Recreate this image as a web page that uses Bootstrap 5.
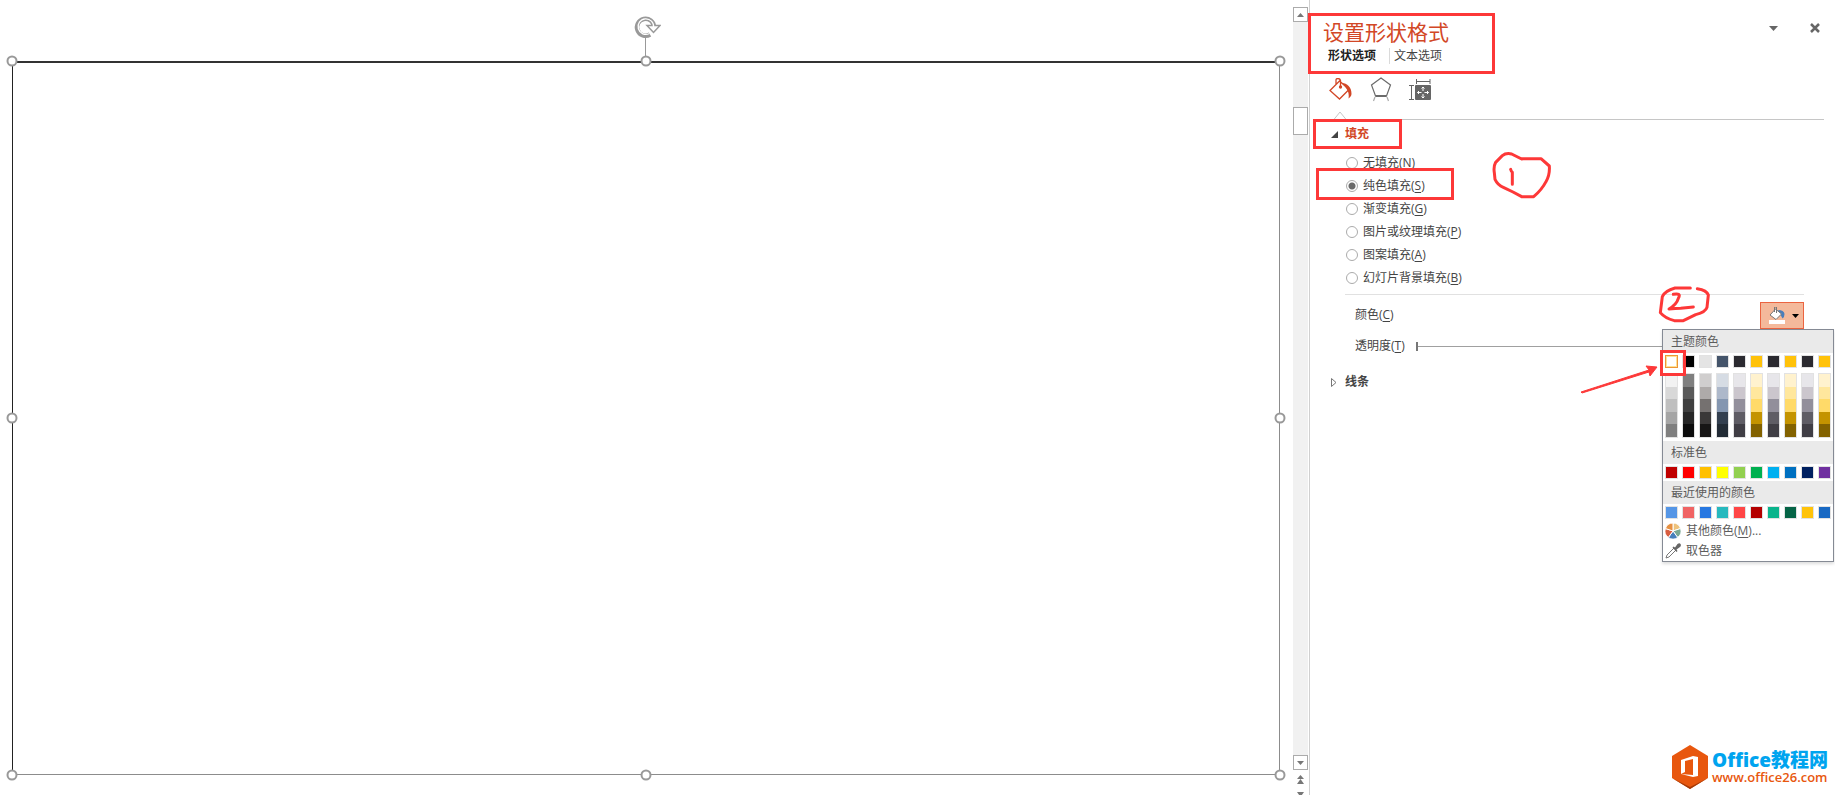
<!DOCTYPE html>
<html lang="zh-CN">
<head>
<meta charset="utf-8">
<meta name="viewport" content="width=device-width, initial-scale=1">
<title>设置形状格式</title>
<link href="https://cdn.jsdelivr.net/npm/bootstrap@5.3.0/dist/css/bootstrap.min.css" rel="stylesheet">
<style>
  body { font: 12px/16px "Open Sans", "Noto Sans CJK SC", sans-serif; color: #444; background: #fff; }
  button { font: inherit; color: inherit; background: none; border: 0; padding: 0; }
  svg { display: block; flex: none; }
  u { text-underline-offset: 2px; }

  /* slide and selected shape */
  .stage { padding: 61px 13px 20px 12px; }
  .shape::before { content: ""; position: absolute; inset: 0; border: 1px solid #8c8c8c; border-top: 2px solid #333; border-left-color: #222; }
  .grip { position: absolute; width: 11px; height: 11px; border: 2px solid #999; border-radius: 50%; background: #fff; transform: translate(-50%, -50%); }
  .rotor { position: absolute; left: 50%; bottom: 100%; transform: translateX(-50%); }

  /* slide scrollbar */
  .scroller { width: 15px; margin-right: 1px; padding-top: 7px; }
  .arrow-btn { height: 15px; border: 1px solid #ababab; background: #fff; }
  .track { background: #f1f1f1; padding-top: 85px; }
  .thumb { height: 28px; border: 1px solid #ababab; background: #fff; }
  .page-btns { height: 25px; padding-top: 5px; overflow: hidden; }

  /* format pane */
  .pane { flex: 0 0 526px; border-left: 1px solid #d0d0d0; padding: 18px 11px 0 13px; }
  .pane-title { font-size: 21px; line-height: 28px; color: #d24726; font-weight: 400; }
  .tabs { padding-left: 5px; margin-top: 2px; height: 16px; }
  .tabs .on { color: #222; font-weight: 700; }
  .tabs button + button { border-left: 1px solid #dadada; padding-left: 4px; margin-left: 13px; }
  .kinds { padding-left: 6px; margin-top: 13px; gap: 17px; }
  .rule-top { height: 9px; margin-top: 9px; padding-left: 10px; }
  .rule-top i { flex: 1; border-bottom: 1px solid #c6c6c6; }
  .section-btn { display: flex; align-items: center; gap: 7px; padding-left: 8px; font-weight: 700; height: 16px; }
  .fill-head { margin-top: 6px; color: #d24726; }
  .fills { padding: 9px 0 0 23px; }
  .fills label { display: flex; align-items: center; gap: 5px; height: 23px; }
  .fills input { appearance: none; margin: 0; width: 12px; height: 12px; border: 1px solid #ababab; border-radius: 50%; background: #fff; }
  .fills input:checked { background: radial-gradient(circle, #6a6a6a 3px, #fff 4px); }
  .props { margin: 5px 20px 0 22px; border-top: 1px solid #e1e1e1; padding: 7px 0 0 10px; }
  .color-label { padding-top: 5px; }
  .color-btn { width: 44px; height: 27px; border: 1px solid #eb6440; background: #f4b99b; padding-left: 5px; }
  .alpha { height: 34px; gap: 11px; }
  .alpha input { appearance: none; height: 9px; margin: 0 60px 0 0; background: linear-gradient(#a0a0a0, #a0a0a0) 0 4px / 100% 1px no-repeat; }
  .alpha input::-webkit-slider-thumb { appearance: none; width: 2px; height: 9px; background: #777; }
  .line-head { margin-top: 11px; gap: 8px; }

  /* colour menu */
  .palette { position: absolute; top: 27px; right: -30px; width: 172px; z-index: 2; background: #fff; border: 1px solid #858a94; box-shadow: 0 2px 3px #0002; color: #5c5c5c; }
  .palette h3 { font: inherit; line-height: 23px; height: 23px; margin: 0; padding-left: 8px; background: #eaeaea; }
  .swatches { display: grid; grid-template-columns: repeat(10, 13px); gap: 4px; padding: 2px 2px; }
  .swatches button { height: 13px; border: 1px solid #e2e2e2; }
  .swatches .picked { border: 1px solid #ee9536; box-shadow: inset 0 0 0 1px #ffe294; }
  .shades { padding: 3px 2px; }
  .shades div { border: 1px solid #e2e2e2; display: grid; grid-template-rows: repeat(5, 1fr); height: 65px; }
  .shades button { height: auto; border: 0; }
  .item { display: flex; align-items: center; gap: 5px; height: 20px; padding-left: 2px; width: 100%; }

  .notes { position: absolute; top: 0; left: 0; overflow: visible; pointer-events: none; z-index: 3; }
  .site { position: absolute; right: 7px; bottom: 6px; gap: 4px; color: #e8570e; font-weight: 600; font-size: 13px; line-height: 15px; text-decoration: none; }
  .site b { display: block; color: #00a4ef; font-size: 19px; line-height: 20px; }
</style>
</head>
<body class="d-flex vh-100 overflow-hidden">
  <main class="stage flex-grow-1 d-flex">
    <div class="shape position-relative flex-grow-1">
      <svg class="rotor" width="30" height="50" viewBox="0 0 30 50" fill="none">
        <path d="M14.500 26v24" stroke="#999"/>
        <path d="M19 23.500A8.500 8.500 0 1 1 23 16" stroke="#999" stroke-width="4.500"/>
        <path d="M16 14.500h13l-6.500 7z" fill="#fff" stroke="#999" stroke-width="1.500"/>
        <path d="M18.500 22.500A7.800 7.800 0 1 1 22.600 16.500" stroke="#fff" stroke-width="1.300"/>
      </svg>
      <span class="grip top-0 start-0"></span><span class="grip top-0 start-50"></span><span class="grip top-0 start-100"></span>
      <span class="grip top-50 start-0"></span><span class="grip top-50 start-100"></span>
      <span class="grip top-100 start-0"></span><span class="grip top-100 start-50"></span><span class="grip top-100 start-100"></span>
    </div>
  </main>

  <div class="scroller d-flex flex-column flex-shrink-0">
    <button class="arrow-btn d-flex align-items-center justify-content-center" aria-label="向上"><svg width="7" height="4"><path d="M0 4l3.500-4L7 4z" fill="#777"/></svg></button>
    <div class="track flex-grow-1"><div class="thumb"></div></div>
    <button class="arrow-btn d-flex align-items-center justify-content-center" aria-label="向下"><svg width="7" height="4"><path d="M0 0h7L3.500 4z" fill="#777"/></svg></button>
    <div class="page-btns d-flex flex-column align-items-center gap-2">
      <button aria-label="上一张"><svg width="7" height="9"><path d="M0 4l3.500-4L7 4zM0 9l3.500-5L7 9z" fill="#777"/></svg></button>
      <button aria-label="下一张"><svg width="7" height="9"><path d="M0 0h7L3.500 5zM0 5h7L3.500 9z" fill="#777"/></svg></button>
    </div>
  </div>

  <aside class="pane position-relative">
    <header class="d-flex justify-content-between">
      <h1 class="pane-title m-0">设置形状格式</h1>
      <div class="d-flex align-items-start gap-4">
        <button class="p-1" aria-label="窗格选项"><svg width="9" height="12"><path d="M0 4h9L4.500 9z" fill="#666"/></svg></button>
        <button class="p-1" aria-label="关闭"><svg width="10" height="12"><path d="M1 2l8 8M9 2l-8 8" stroke="#666" stroke-width="2.500"/></svg></button>
      </div>
    </header>
    <div class="tabs d-flex"><button class="on">形状选项</button><button>文本选项</button></div>
    <div class="kinds d-flex">
      <button aria-label="填充与线条"><svg width="24" height="23" viewBox="0 0 24 23" fill="none" stroke="#d24726" stroke-width="1.300"><path d="M10.500 3L1 12.500 10.500 21 20 11.500zM7 7V2q0-1.500 2-1.500t2.500 2V9"/><circle cx="11.500" cy="9" r="1" fill="#d24726"/><path d="M13 5c5 0 9.500 4 9.500 11 0 2-2 3.500-3 4.500 1-5-.5-9-6.500-15.500z" fill="#d24726" stroke="none"/></svg></button>
      <button aria-label="效果"><svg width="22" height="25" viewBox="0 0 22 25" fill="none" stroke="#6b6b6b" stroke-width="1.200"><path d="M11 1l9.500 7-4 11h-11l-4-11z"/><path d="M5.500 19h11" stroke-width="2"/><path d="M5 20l-1.500 4M17 20l1.500 4" stroke="#aaa"/></svg></button>
      <button aria-label="大小与属性"><svg width="22" height="23" viewBox="0 0 22 23" fill="none" stroke="#666"><path d="M7.500 1v5M21 1v5M7.500 3.500H21M0 7.500h5M0 21.500h5M2.500 7.500v14" /><rect x="6" y="7" width="16" height="15" rx="1" fill="#666" stroke="none"/><path d="M14 9v4M14 16v4M8.500 14.500h4M15.500 14.500h4M12.500 10.500L14 9l1.500 1.500M12.500 18.500L14 20l1.500-1.500M10 13l-1.500 1.500L10 16M18 13l1.500 1.500L18 16" stroke="#fff"/></svg></button>
    </div>
    <div class="rule-top d-flex"><svg width="14" height="9" fill="none" stroke="#c6c6c6"><path d="M0.500 9L7 1l6.500 8"/></svg><i></i></div>

    <button class="section-btn fill-head"><svg width="7" height="7"><path d="M7 0v7H0z" fill="#444"/></svg>填充</button>
    <div class="fills">
      <label><input type="radio" name="fill"><span>无填充(<u>N</u>)</span></label>
      <label><input type="radio" name="fill" checked><span>纯色填充(<u>S</u>)</span></label>
      <label><input type="radio" name="fill"><span>渐变填充(<u>G</u>)</span></label>
      <label><input type="radio" name="fill"><span>图片或纹理填充(<u>P</u>)</span></label>
      <label><input type="radio" name="fill"><span>图案填充(<u>A</u>)</span></label>
      <label><input type="radio" name="fill"><span>幻灯片背景填充(<u>B</u>)</span></label>
    </div>
    <div class="props">
      <div class="d-flex justify-content-between">
        <span class="color-label">颜色(<u>C</u>)</span>
        <div class="position-relative">
          <button class="color-btn d-flex align-items-center gap-1" aria-label="填充颜色">
            <svg width="22" height="17" viewBox="0 0 22 17"><path d="M12 3q6 0 6.500 4 0 3-2 4.500z" fill="#4a7ebb"/><path d="M9.500 2L4 8l6 4.500L15.500 7z" fill="#fff" stroke="#777"/><path d="M8.500 5V0h2v6" fill="none" stroke="#777"/><path d="M3 13h16v4H3z" fill="#fff"/></svg>
            <svg width="7" height="4"><path d="M0 0h7L3.500 4z" fill="#000"/></svg>
          </button>
          <div class="palette">
            <h3>主题颜色</h3>
            <div class="swatches" id="theme"></div>
            <div class="swatches shades" id="shades"></div>
            <h3>标准色</h3>
            <div class="swatches" id="standard"></div>
            <h3>最近使用的颜色</h3>
            <div class="swatches" id="recent"></div>
            <button class="item"><svg width="16" height="16" viewBox="-8 -8 16 16" stroke="#fff"><path d="M0 0V-8A8 8 0 0 1 7.600-2.500z" fill="#edc27c"/><path d="M0 0L7.600-2.500A8 8 0 0 1 4.700 6.500z" fill="#79a893"/><path d="M0 0L4.700 6.500A8 8 0 0 1-4.700 6.500z" fill="#477fbc"/><path d="M0 0L-4.700 6.500A8 8 0 0 1-7.600-2.500z" fill="#d85d40"/><path d="M0 0L-7.600-2.500A8 8 0 0 1 0-8z" fill="#e69041"/></svg><span>其他颜色(<u>M</u>)...</span></button>
            <button class="item"><svg width="16" height="16" viewBox="0 0 16 16"><path d="M1 15l1-3 7-7 2 2-7 7z" fill="#fff" stroke="#777"/><path d="M7.500 4.500l1-1 1.500 1 2.500-3.500q2-1.500 3 0t-.5 3L11.500 6.500l1 1.500-1 1z" fill="#666"/></svg><span>取色器</span></button>
          </div>
        </div>
      </div>
      <div class="alpha d-flex align-items-center"><label for="alpha">透明度(<u>T</u>)</label><input class="flex-grow-1" type="range" id="alpha" min="0" max="100" value="0"></div>
    </div>
    <button class="section-btn line-head"><svg width="6" height="9" fill="none" stroke="#777"><path d="M.5.500v8L5 4.500z"/></svg><span>线条</span></button>

    <!-- tutorial marks -->
    <svg class="notes" width="525" height="600" viewBox="1310 0 525 600" fill="none" stroke="#fd3838" stroke-width="3">
      <path d="M1309.500 14.500h184v58h-184zM1314.500 120.500h86v27h-86zM1317.500 169.500h135v29h-135zM1661.500 351.500h23v23h-23z"/>
      <g transform="translate(1285 140) scale(.33333)" stroke-width="9" stroke-linecap="round" stroke-linejoin="round"><path d="M710 57L680 42Q663 38 652 47L632 67Q625 80 628 98L630 118Q638 135 655 142L684 156 710 170H746Q770 150 783 125 795 105 793 78L768 56H710M677 88q2 7 5 9v36"/></g>
      <g transform="translate(1560 280) scale(.33333)" stroke-width="9" stroke-linecap="round" stroke-linejoin="round"><path d="M391 24H345Q315 32 307 50L301 98Q315 115 343 122H370L407 104Q437 96 441 82L445 45Q440 30 412 26M340 43q25-5 15 12-5 18-28 32 20-2 35-2l38-4"/></g>
      <path d="M1581 392L1649 370 1646 366 1657 367 1650 376 1649 372 1582 393z" fill="#fd3838" stroke-width="1"/>
    </svg>

    <a class="site d-flex align-items-center" href="#">
      <svg width="36" height="44" viewBox="0 0 36 44"><path d="M18 0l18 11v22L18 44 0 33V11z" fill="#e8570e"/><path d="M0 33l18 9 18-9L18 44z" fill="#a33a08"/><path d="M9 15l12-4 5 1v19l-5 1-12-3 12 1V14l-8 2v11l-4 2z" fill="#fff"/></svg>
      <span><b>Office教程网</b>www.office26.com</span>
    </a>
  </aside>

<script src="https://cdn.jsdelivr.net/npm/bootstrap@5.3.0/dist/js/bootstrap.bundle.min.js"></script>
<script>
  const chip = c => `<button style="background:${c}" aria-label="${c}"></button>`;
  const fill = (id, list) => document.getElementById(id).innerHTML = list.split(' ').map(chip).join('');
  fill('theme', '#fff #000 #e4e4e4 #44546a #2b2a30 #ffc20a #2b2a30 #ffc20a #2b2a30 #ffc20a');
  fill('standard', '#c00000 #f00 #ffc000 #ff0 #92d050 #00b050 #00b0f0 #0070c0 #002060 #7030a0');
  fill('recent', '#5596e6 #f06464 #2878e1 #28b9be #ff4646 #b40000 #0ab48c #056446 #ffc30a #1969c3');
  document.querySelector('#theme button').className = 'picked';
  const dark = '#e7e6ea #cbc6cd #928f9b #5f5d65 #403e45', gold = '#fff2ce #ffe79d #ffda69 #c49300 #836200';
  const columns = ['#f2f2f2 #d8d8d8 #bfbfbf #a5a5a5 #7f7f7f', '#7f7f7f #595959 #3f3f3f #262626 #0c0c0c', '#d0cece #aeaaa9 #757170 #3a3838 #171616', '#d6dce4 #adb8ca #8496b0 #333f4f #222b35', dark, gold, dark, gold, dark, gold];
  document.getElementById('shades').innerHTML = columns.map(c => `<div>${c.split(' ').map(chip).join('')}</div>`).join('');
</script>
</body>
</html>
